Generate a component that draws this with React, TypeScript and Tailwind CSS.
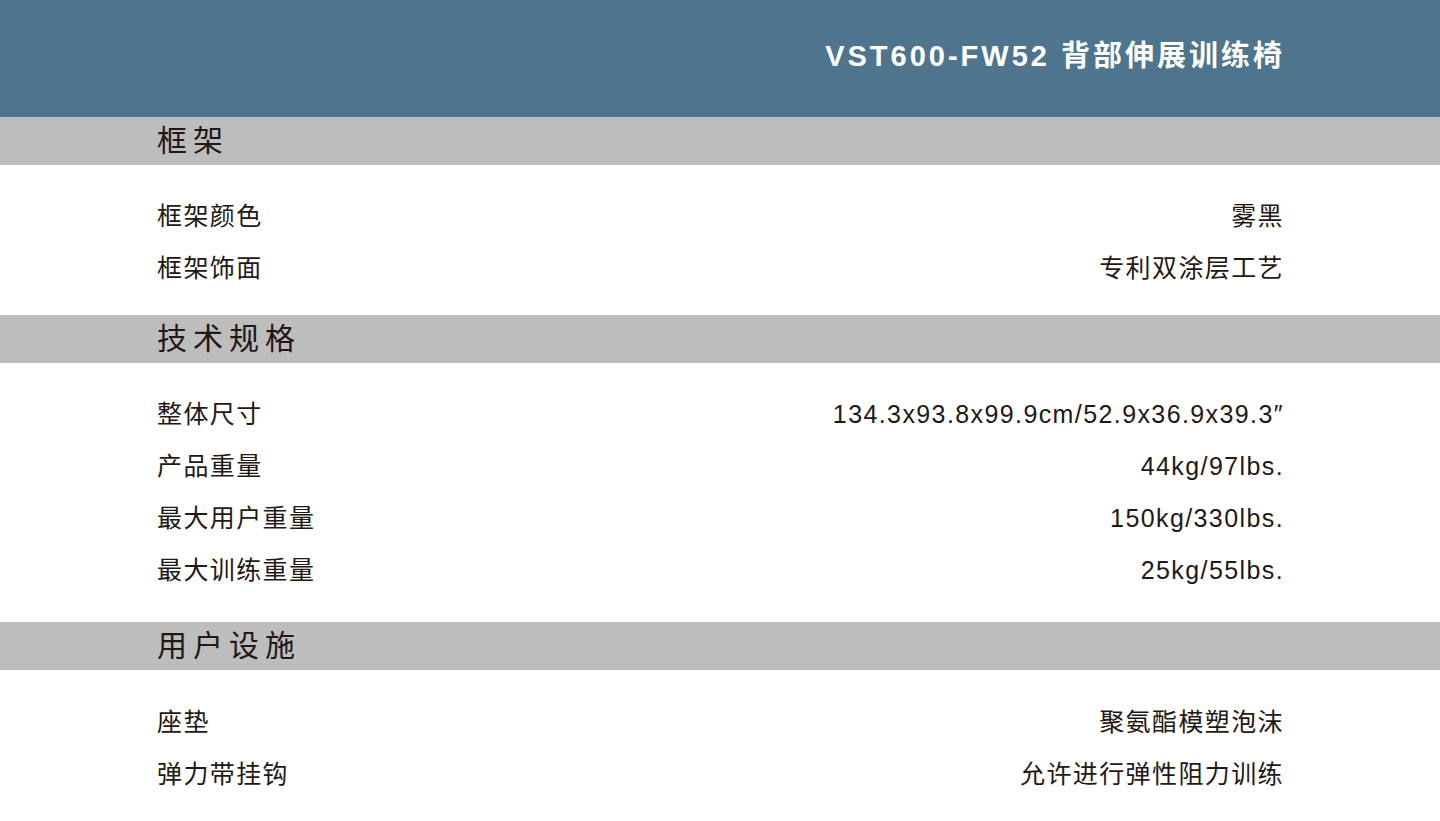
import React from "react";

type Row = { label: string; value: string };
type Section = { title: string; rows: Row[]; pad: string };

const sections: Section[] = [
  {
    title: "框架",
    pad: "pt-[25px] pb-[21px]",
    rows: [
      { label: "框架颜色", value: "雾黑" },
      { label: "框架饰面", value: "专利双涂层工艺" },
    ],
  },
  {
    title: "技术规格",
    pad: "pt-[25px] pb-[26px]",
    rows: [
      { label: "整体尺寸", value: "134.3x93.8x99.9cm/52.9x36.9x39.3″" },
      { label: "产品重量", value: "44kg/97lbs." },
      { label: "最大用户重量", value: "150kg/330lbs." },
      { label: "最大训练重量", value: "25kg/55lbs." },
    ],
  },
  {
    title: "用户设施",
    pad: "pt-[26px] pb-[24px]",
    rows: [
      { label: "座垫", value: "聚氨酯模塑泡沫" },
      { label: "弹力带挂钩", value: "允许进行弹性阻力训练" },
    ],
  },
];

const font = {
  fontFamily: '"Liberation Sans", "Noto Sans CJK SC", sans-serif',
};

export default function App() {
  return (
    <div className="w-[1440px] min-h-[821px] bg-white text-[#231815]" style={font}>
      <header className="h-[117px] bg-[#4e758d] flex items-center justify-end pr-[155px] pb-[4px]">
        <h1 className="text-[29px] font-bold text-white tracking-[3px] leading-none">
          VST600-FW52 背部伸展训练椅
        </h1>
      </header>

      {sections.map((s) => (
        <section key={s.title}>
          <div className="h-[48px] bg-[#bdbdbd] flex items-center pl-[157px]">
            <h2 className="text-[30px] tracking-[6px] leading-none">{s.title}</h2>
          </div>
          <div className={`pr-[156px] pl-[157px] ${s.pad}`}>
            {s.rows.map((r) => (
              <div
                key={r.label}
                className="h-[52px] flex items-center justify-between text-[25px] tracking-[1.4px] leading-none"
              >
                <span>{r.label}</span>
                <span>{r.value}</span>
              </div>
            ))}
          </div>
        </section>
      ))}
    </div>
  );
}
